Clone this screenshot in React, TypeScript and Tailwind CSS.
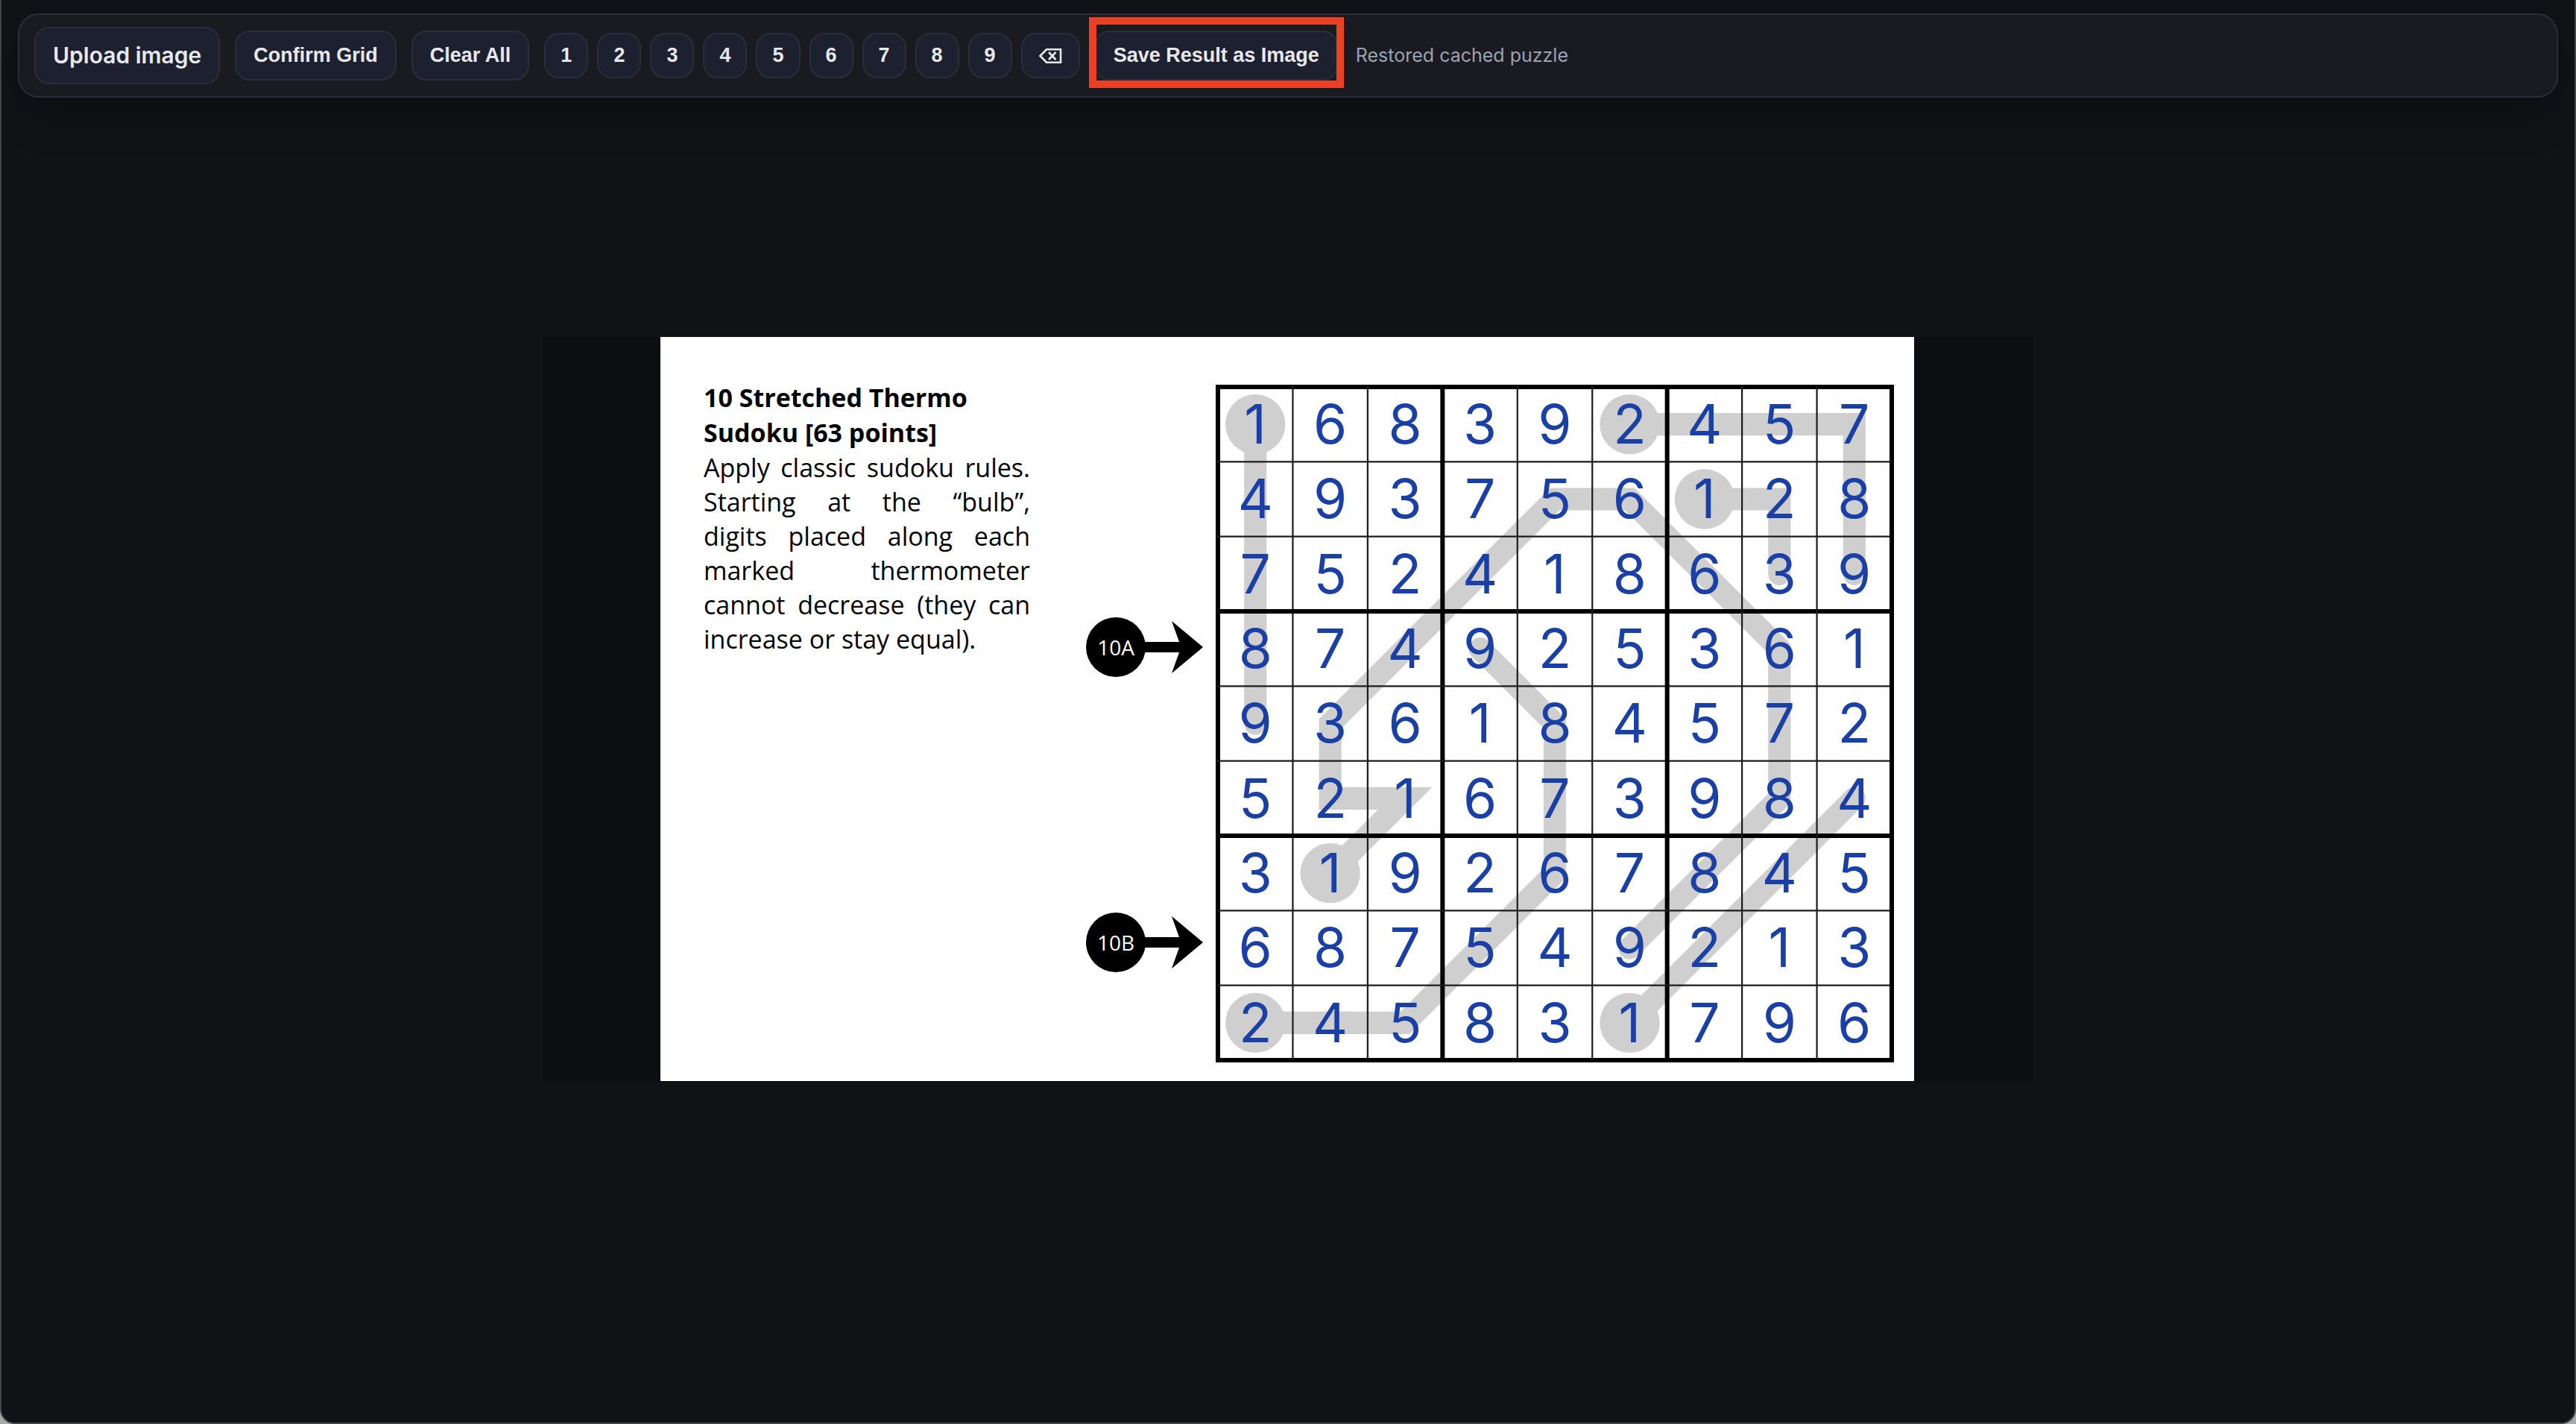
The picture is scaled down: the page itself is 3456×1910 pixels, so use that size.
import type { ReactNode } from "react";

const SOLUTION = [
  "168392457",
  "493756128",
  "752418639",
  "874925361",
  "936184572",
  "521673984",
  "319267845",
  "687549213",
  "245831796",
];

// Each thermometer is a list of [column, row] stops; the first one is the bulb.
const THERMOS: [number, number][][] = [
  [[1, 1], [1, 5]],
  [[6, 1], [9, 1], [9, 3]],
  [[7, 2], [8, 2], [8, 3]],
  [[2, 7], [3, 6], [2, 6], [2, 5], [5, 2], [6, 2], [8, 4], [8, 6], [6, 8]],
  [[1, 9], [3, 9], [5, 7], [5, 5], [4, 4]],
  [[6, 9], [9, 6]],
];

const RULES = [
  "Apply classic sudoku rules.",
  "Starting at the “bulb”,",
  "digits placed along each",
  "marked thermometer",
  "cannot decrease (they can",
];

const at = (n: number) => n * 100 - 50;
const LINES = [0, 1, 2, 3, 4, 5, 6, 7, 8, 9];

function ToolButton({ children }: { children: ReactNode }) {
  return (
    <button
      type="button"
      className="rounded-[20px] border-2 border-[#2a2e38] bg-[#1d202f] px-[23px] py-4 text-[27px] leading-[31px] font-bold text-[#e6e8ee]"
    >
      {children}
    </button>
  );
}

function KeyButton({ label, children }: { label: string; children: ReactNode }) {
  return (
    <button
      type="button"
      aria-label={label}
      className="flex h-[61px] items-center justify-center rounded-[20px] border-2 border-[#2a2e38] bg-[#1d202f] px-5 text-[27px] leading-[31px] font-bold text-[#e6e8ee]"
    >
      {children}
    </button>
  );
}

function Toolbar() {
  return (
    <header className="mx-[22px] mt-[18px] flex items-center gap-5 rounded-[28px] border-2 border-[#2a2e38] bg-[#1a1b20] px-5 py-4 font-['Liberation_Sans',Arial,sans-serif] shadow-[0_20px_60px_rgba(0,0,0,0.2)]">
      <button
        type="button"
        className="rounded-[20px] border-2 border-[#2a2e38] bg-[#1d202f] px-[23px] py-4 font-[Inter,sans-serif] text-[30px] leading-[41px] font-semibold text-[#e6e8ee]"
      >
        Upload image
      </button>
      <ToolButton>Confirm Grid</ToolButton>
      <ToolButton>Clear All</ToolButton>
      <div className="flex gap-3">
        {LINES.slice(1).map((n) => (
          <KeyButton key={n} label={`Digit ${n}`}>
            {n}
          </KeyButton>
        ))}
        <KeyButton label="Erase">
          <svg className="h-[22px] w-[35px]" viewBox="0 0 35 22" fill="none" stroke="currentColor" strokeWidth="2.6">
            <path d="M12 2.3H31V19.7H12L3.5 11Z" />
            <path d="M15 6L24.5 16M24.5 6L15 16" />
          </svg>
        </KeyButton>
      </div>
      <div className="relative flex">
        <ToolButton>Save Result as Image</ToolButton>
        <div className="pointer-events-none absolute -inset-x-2 -top-[18px] -bottom-[10px] border-10 border-[#ea4025]" />
      </div>
      <span className="ml-1 font-[Inter,sans-serif] text-[25px] text-[#9aa3b2]">Restored cached puzzle</span>
    </header>
  );
}

function RowMarker({ label }: { label: string }) {
  return (
    <div className="flex items-center">
      <span className="flex size-20 items-center justify-center rounded-full bg-black font-['Open_Sans',sans-serif] text-[28px] text-white">
        {label}
      </span>
      <svg className="-ml-1 h-[70px] w-[81px]" viewBox="0 0 81 70">
        <path d="M0 28H49L39 0L81 35L39 70L49 42H0Z" />
      </svg>
    </div>
  );
}

function Board() {
  return (
    <div className="relative mt-[9px] h-[903px] w-[904px]">
      <svg className="absolute inset-0 size-full overflow-visible" viewBox="0 0 900 900" preserveAspectRatio="none">
        {THERMOS.map((stops, i) => (
          <g key={i} fill="#cfcfcf">
            <circle cx={at(stops[0][0])} cy={at(stops[0][1])} r="40" />
            <polyline
              points={stops.map(([c, r]) => `${at(c)},${at(r)}`).join(" ")}
              fill="none"
              stroke="#cfcfcf"
              strokeWidth="30"
              strokeLinecap="round"
            />
          </g>
        ))}
        {LINES.map((n) => (
          <path
            key={n}
            d={`M${n * 100} 0V900M0 ${n * 100}H900`}
            stroke={n % 3 ? "#1c1c1c" : "#000"}
            strokeWidth={n % 3 ? 2.2 : 6}
            strokeLinecap="square"
          />
        ))}
      </svg>
      <table className="relative size-full table-fixed border-collapse font-[Inter,sans-serif] text-[73px] leading-[96px] text-[#1b40a5]">
        <tbody>
          {SOLUTION.map((row, r) => (
            <tr key={r}>
              {row.split("").map((digit, c) => (
                <td key={c} className="p-0 text-center align-middle">
                  {digit}
                </td>
              ))}
            </tr>
          ))}
        </tbody>
      </table>
    </div>
  );
}

function Puzzle() {
  return (
    <article className="flex h-[998px] w-[1682px] items-start bg-white pt-[58px] pl-[58px] text-black">
      <div className="w-[438px] font-['Open_Sans',sans-serif] text-[34px] leading-[46px]">
        <h1 className="leading-[47px] font-bold">
          10 Stretched Thermo
          <br />
          Sudoku [63 points]
        </h1>
        <p>
          {RULES.map((line) => (
            <span key={line} className="block text-justify [text-align-last:justify]">
              {line}{" "}
            </span>
          ))}
          increase or stay equal).
        </p>
      </div>
      <div className="mr-5 ml-[75px] flex flex-col gap-[316px] pt-[318px]">
        <RowMarker label="10A" />
        <RowMarker label="10B" />
      </div>
      <Board />
    </article>
  );
}

export default function App() {
  return (
    <div className="bg-[#a8a8a8]">
      <div className="flex min-h-screen flex-col rounded-b-[20px] border-x-2 border-b-2 border-[#434446] bg-[#111216]">
        <Toolbar />
        <main className="flex flex-1 items-center justify-center pb-[135px]">
          <div className="flex h-[1000px] w-[2000px] items-start justify-center bg-[#0c0e11] pr-0.5">
            <Puzzle />
          </div>
        </main>
      </div>
    </div>
  );
}
